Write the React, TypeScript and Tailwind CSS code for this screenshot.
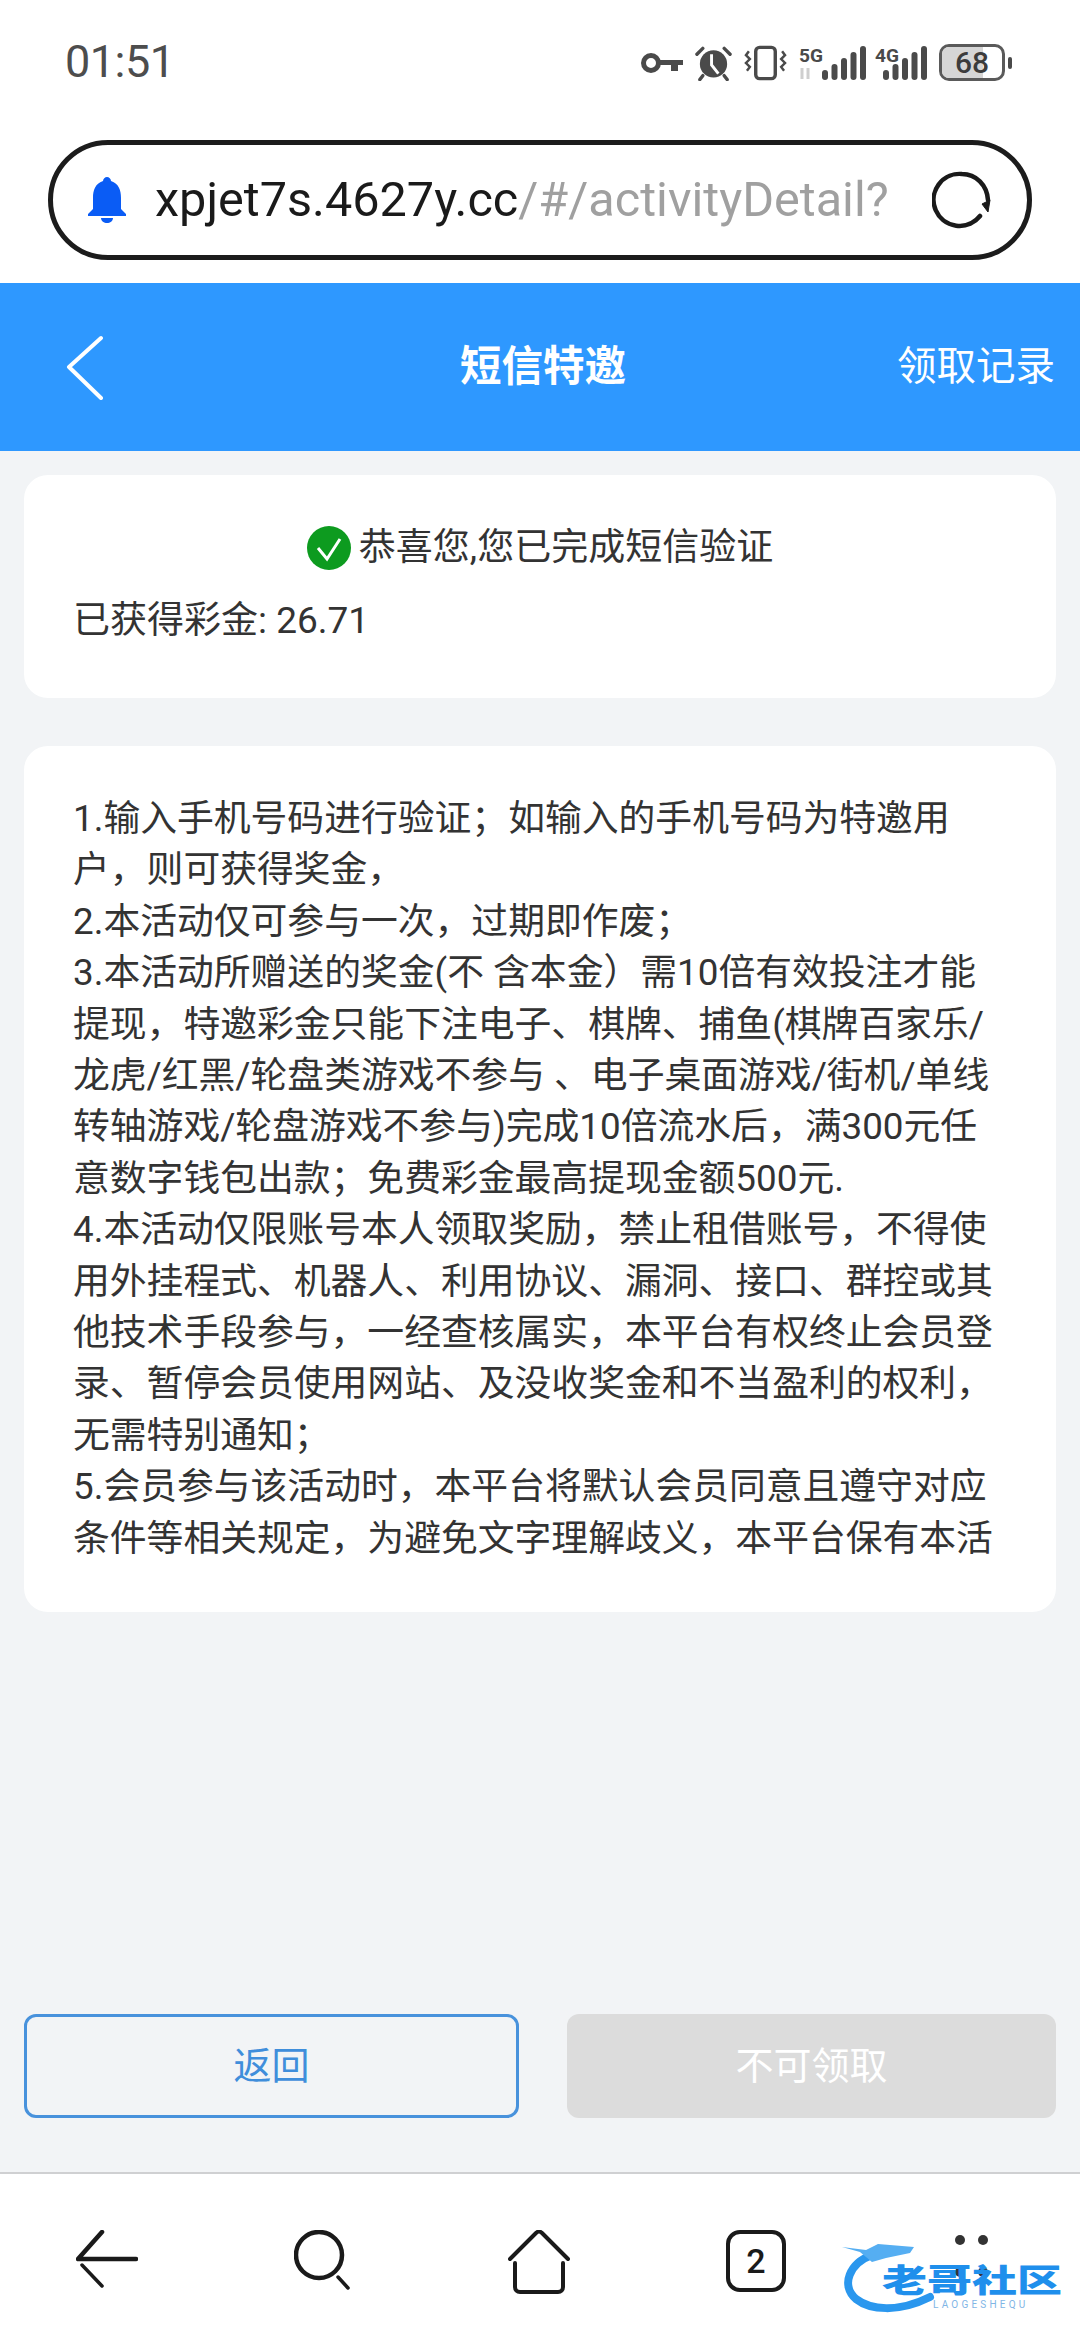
const cjk = "font-['Roboto','Noto_Sans_CJK_SC',sans-serif]";

const rules = [
  "1.输入手机号码进行验证；如输入的手机号码为特邀用",
  "户，则可获得奖金，",
  "2.本活动仅可参与一次，过期即作废；",
  "3.本活动所赠送的奖金(不 含本金）需10倍有效投注才能",
  "提现，特邀彩金只能下注电子、棋牌、捕鱼(棋牌百家乐/",
  "龙虎/红黑/轮盘类游戏不参与 、电子桌面游戏/街机/单线",
  "转轴游戏/轮盘游戏不参与)完成10倍流水后，满300元任",
  "意数字钱包出款；免费彩金最高提现金额500元.",
  "4.本活动仅限账号本人领取奖励，禁止租借账号，不得使",
  "用外挂程式、机器人、利用协议、漏洞、接口、群控或其",
  "他技术手段参与，一经查核属实，本平台有权终止会员登",
  "录、暂停会员使用网站、及没收奖金和不当盈利的权利，",
  "无需特别通知；",
  "5.会员参与该活动时，本平台将默认会员同意且遵守对应",
  "条件等相关规定，为避免文字理解歧义，本平台保有本活",
];

function Signal({ label, width, fromBar }: { label: string; width: number; fromBar: number }) {
  const bars = [10, 16, 22, 28, 34];
  return (
    <svg width={width} height="36" viewBox={`0 0 ${width} 36`} className="overflow-visible text-[#4a4a4a]">
      <text x="0" y="17" fontSize="19" fontWeight="700" textLength="24" lengthAdjust="spacingAndGlyphs" fontFamily="Roboto, sans-serif" fill="currentColor">
        {label}
      </text>
      {label === "5G" && <path d="M3 23v11M9 34V23" stroke="#cfcfcf" strokeWidth="3" />}
      {bars.map((h, i) => (
        <rect key={i} x={fromBar + i * 9.5} y={35 - h} width="6" height={h} rx="3" fill="currentColor" />
      ))}
    </svg>
  );
}

function StatusIcons() {
  return (
    <div className="flex items-center text-[#4a4a4a]">
      <svg width="42" height="24" viewBox="0 0 42 24" fill="none">
        <circle cx="10" cy="12" r="7.5" stroke="currentColor" strokeWidth="5" />
        <path d="M17 9h25v5h-5v6h-7v-6H17z" fill="currentColor" />
      </svg>
      <svg width="37" height="36" viewBox="0 0 38 36" fill="none" className="ml-[12px]">
        <circle cx="19" cy="19" r="14" fill="currentColor" />
        <path d="M17 9v11l7 9" stroke="#fff" strokeWidth="3" />
        <path d="M2 9l6-6M36 9l-6-6M8 31l-3 4M30 31l3 4" stroke="currentColor" strokeWidth="3.5" strokeLinecap="round" />
      </svg>
      <svg width="43" height="36" viewBox="0 0 44 36" fill="none" stroke="currentColor" className="ml-[12px]">
        <rect x="12" y="2" width="20" height="32" rx="4" strokeWidth="3.5" />
        <path d="M5 6l-3 4 4 4-4 4 4 4-3 4M39 6l3 4-4 4 4 4-4 4 3 4" strokeWidth="2.5" />
      </svg>
      <div className="ml-[12px]">
        <Signal label="5G" width={66} fromBar={23} />
      </div>
      <div className="ml-[10px]">
        <Signal label="4G" width={54} fromBar={8} />
      </div>
      <div className="relative ml-[10px] flex h-[37px] w-[66px] items-center justify-center overflow-hidden rounded-[10px] border-[3px] border-[#5a5a5a]">
        <div className="absolute inset-y-0 left-0 w-[68%] bg-[#d6d6d6]" />
        <span className="relative text-[30px] leading-none font-medium text-[#3c3c3c] font-['Roboto',sans-serif]">68</span>
      </div>
      <div className="ml-[3px] h-[12px] w-[4px] rounded-full bg-[#4a4a4a]" />
    </div>
  );
}

function UrlBar() {
  return (
    <div className="mx-[48px] flex h-[120px] items-center rounded-[60px] border-[5px] border-[#1c1c1c] bg-white pl-[34px] pr-[35px]">
      <svg width="40" height="46" viewBox="0 0 40 46" className="shrink-0">
        <path d="M20 0c2 0 4 2 4 4 8 3 10 9 10 17v11l5 5v2H1v-2l5-5V21c0-8 2-14 10-17 0-2 2-4 4-4z" fill="#0a5cf5" />
        <path d="M14 41h12c0 3-3 5-6 5s-6-2-6-5z" fill="#0a5cf5" />
      </svg>
      <div className={`ml-[28px] flex-1 whitespace-nowrap text-[48.6px] leading-[60px] ${cjk}`}>
        <span className="text-[#1a1a1a]">xpjet7s.4627y.cc</span>
        <span className="text-[#a0a0a0]">/#/activityDetail?</span>
      </div>
      <svg width="60" height="60" viewBox="0 0 60 60" fill="none" stroke="#1a1a1a" className="shrink-0">
        <path d="M48 46A26 26 0 1 1 30 4c14 0 25 11 26 26" strokeWidth="4.5" strokeLinecap="round" />
        <path d="M50 34l6 8 2-12z" fill="#1a1a1a" strokeWidth="1" />
      </svg>
    </div>
  );
}

function BottomNav() {
  return (
    <div className="relative flex h-[168px] items-start gap-[156px] border-t-2 border-[#cfd0d2] bg-white pl-[76px] pt-[56px]">
      <svg width="62" height="58" viewBox="0 0 62 58" fill="none" stroke="#1a1a1a" strokeLinecap="round" className="shrink-0">
        <path d="M26 2L2 29h58" strokeWidth="4.5" strokeLinejoin="round" />
        <path d="M6 35l20 21" strokeWidth="3.5" />
      </svg>
      <svg width="58" height="60" viewBox="0 0 58 60" fill="none" stroke="#1a1a1a" strokeLinecap="round" className="shrink-0">
        <circle cx="25" cy="25" r="23" strokeWidth="4.5" />
        <path d="M44 47l10 11" strokeWidth="3.5" />
      </svg>
      <svg width="62" height="64" viewBox="0 0 62 64" fill="none" stroke="#1a1a1a" strokeLinecap="round" strokeLinejoin="round" className="shrink-0">
        <path d="M2 29L28 3c2-2 4-2 6 0l26 26" strokeWidth="4" />
        <path d="M7 33v24c0 3 2 5 5 5h38c3 0 5-2 5-5V33" strokeWidth="4" />
      </svg>
      <div className="flex h-[62px] w-[60px] shrink-0 items-center justify-center rounded-[14px] border-[4px] border-[#1a1a1a] text-[34px] leading-none font-medium text-[#1a1a1a] font-['Roboto',sans-serif]">
        2
      </div>
      <div className="ml-[7px] mt-[5px] grid h-[42px] w-[45px] shrink-0 grid-cols-2 content-between justify-items-center">
        <span className="h-[10px] w-[10px] rounded-full bg-[#333]" />
        <span className="h-[10px] w-[10px] rounded-full bg-[#333]" />
        <span className="h-[10px] w-[10px] rounded-full bg-[#333]" />
        <span className="h-[10px] w-[10px] rounded-full bg-[#333]" />
      </div>
      {/* watermark over the nav */}
      <div className="absolute left-[842px] top-[69px] h-[72px] w-[224px]">
        <svg width="100" height="72" viewBox="0 0 100 72" fill="none" className="absolute left-0 top-0">
          <path d="M30 12C8 20-2 42 14 56c14 11 42 14 74-2" stroke="#2a97ee" strokeWidth="8" strokeLinecap="round" />
          <path d="M0 4l24 3 12-6 36 3-4 6-24 5-14 4-12-10z" fill="#55aef2" />
        </svg>
        <div className="absolute left-[40px] top-[20px] origin-top scale-y-[0.72] text-[45px] leading-[42px] font-black whitespace-nowrap text-[#1f8fec] font-['Noto_Sans_CJK_SC',sans-serif]">
          老哥社区
        </div>
        <div className="absolute left-[91px] top-[57px] text-[10px] leading-none tracking-[3.2px] whitespace-nowrap text-[#7fb6e6] font-['Roboto',sans-serif]">
          LAOGESHEQU
        </div>
      </div>
    </div>
  );
}

export default function App() {
  return (
    <div className={`flex h-[2340px] w-[1080px] flex-col overflow-hidden bg-white ${cjk}`}>
      <div className="flex h-[140px] items-start justify-between pl-[65px] pr-[68px] pt-[36px]">
        <span className="text-[45px] leading-[52px] tracking-[-0.5px] text-[#4d4d4d]">01:51</span>
        <div className="pt-[8px]">
          <StatusIcons />
        </div>
      </div>
      <UrlBar />
      <div className="mt-[23px] flex h-[168px] items-center justify-between bg-[#2e98ff] pr-[25px] text-white">
        <div className="pl-[66px]">
          <svg width="38" height="66" viewBox="0 0 38 66" fill="none" stroke="#fff" strokeLinecap="round" strokeLinejoin="round">
            <path d="M35 4L3 33l32 31" strokeWidth="4" />
          </svg>
        </div>
        <span className="ml-[85px] text-[41.5px] font-bold">短信特邀</span>
        <span className="text-[39.5px]">领取记录</span>
      </div>
      <main className="flex flex-1 flex-col bg-[#f2f4f6] px-[24px] pt-[24px]">
        <section className="h-[223px] rounded-[24px] bg-white px-[49px] pt-[47px] text-[#333]">
          <div className="flex items-center justify-center">
            <svg width="44" height="44" viewBox="0 0 44 44" className="mr-[8px] shrink-0">
              <circle cx="22" cy="22" r="22" fill="#0d9b1f" />
              <path d="M11 22l9 11 13-20" fill="none" stroke="#fff" strokeWidth="3" />
            </svg>
            <span className="text-[37px] leading-[52px]">恭喜您,您已完成短信验证</span>
          </div>
          <div className="mt-[21px] text-[37px] leading-[52px]">已获得彩金: 26.71</div>
        </section>
        <section className="mt-[48px] h-[866px] rounded-[24px] bg-white px-[49px] pt-[47px] text-[36.8px] leading-[51.4px] text-[#333]">
          {rules.map((line) => (
            <div key={line} className="whitespace-nowrap">
              {line}
            </div>
          ))}
        </section>
        <div className="mt-auto mb-[54px] flex gap-[48px]">
          <button className="h-[104px] flex-1 rounded-[12px] border-[3px] border-[#4892dc] text-[38px] text-[#3f8edb]">返回</button>
          <button className="h-[104px] flex-1 rounded-[12px] bg-[#dcdcdc] text-[38px] text-white">不可领取</button>
        </div>
      </main>
      <BottomNav />
    </div>
  );
}
